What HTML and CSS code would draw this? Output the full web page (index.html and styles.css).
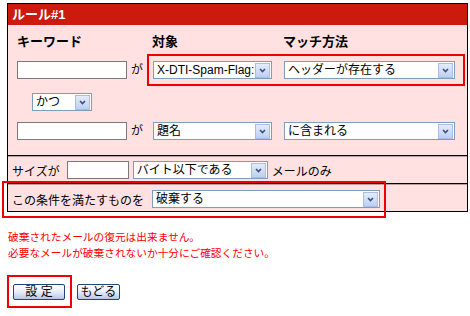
FILE: index.html
```html
<!DOCTYPE html>
<html lang="ja">
<head>
    <meta charset="UTF-8">
    <link rel="stylesheet" href="styles.css">
    <title>ルール設定</title>
</head>
<body>
<div class="page">

    <div class="rule">
        <div class="rule-title">ルール#1</div>

        <div class="cond">
            <div class="cond-head">
                <span class="col-key">キーワード</span>
                <span class="col-target">対象</span>
                <span>マッチ方法</span>
            </div>

            <div class="cond-row">
                <div class="input"></div>
                <span class="ga">が</span>
                <div class="pair mark mark-pair">
                    <div class="select sel-target"><span class="sel-text">X-DTI-Spam-Flag:</span><span class="arrow"><svg width="7" height="5" viewBox="0 0 7 5"><path d="M1 1 L3.5 3.5 L6 1" fill="none" stroke="#3b4f78" stroke-width="1.6"/></svg></span></div>
                    <div class="select sel-match"><span class="sel-text">ヘッダーが存在する</span><span class="arrow"><svg width="7" height="5" viewBox="0 0 7 5"><path d="M1 1 L3.5 3.5 L6 1" fill="none" stroke="#3b4f78" stroke-width="1.6"/></svg></span></div>
                </div>
            </div>

            <div class="and-row">
                <div class="select sel-and"><span class="sel-text">かつ</span><span class="arrow"><svg width="7" height="5" viewBox="0 0 7 5"><path d="M1 1 L3.5 3.5 L6 1" fill="none" stroke="#3b4f78" stroke-width="1.6"/></svg></span></div>
            </div>

            <div class="cond-row cond-row-2">
                <div class="input"></div>
                <span class="ga">が</span>
                <div class="pair">
                    <div class="select sel-target"><span class="sel-text">題名</span><span class="arrow"><svg width="7" height="5" viewBox="0 0 7 5"><path d="M1 1 L3.5 3.5 L6 1" fill="none" stroke="#3b4f78" stroke-width="1.6"/></svg></span></div>
                    <div class="select sel-match"><span class="sel-text">に含まれる</span><span class="arrow"><svg width="7" height="5" viewBox="0 0 7 5"><path d="M1 1 L3.5 3.5 L6 1" fill="none" stroke="#3b4f78" stroke-width="1.6"/></svg></span></div>
                </div>
            </div>
        </div>

        <div class="size-row">
            <span>サイズが</span>
            <div class="input input-size"></div>
            <div class="select sel-size"><span class="sel-text">バイト以下である</span><span class="arrow"><svg width="7" height="5" viewBox="0 0 7 5"><path d="M1 1 L3.5 3.5 L6 1" fill="none" stroke="#3b4f78" stroke-width="1.6"/></svg></span></div>
            <span class="size-tail">メールのみ</span>
        </div>

        <div class="action-row">
            <div class="action mark mark-action">
                <span>この条件を満たすものを</span>
                <div class="select sel-action"><span class="sel-text">破棄する</span><span class="arrow"><svg width="7" height="5" viewBox="0 0 7 5"><path d="M1 1 L3.5 3.5 L6 1" fill="none" stroke="#3b4f78" stroke-width="1.6"/></svg></span></div>
            </div>
        </div>
    </div>

    <p class="warn">破棄されたメールの復元は出来ません。<br>必要なメールが破棄されないか十分にご確認ください。</p>

    <div class="buttons">
        <div class="save-frame"><button type="button" class="btn btn-save">設 定</button></div>
        <button type="button" class="btn btn-back">もどる</button>
    </div>

</div>
</body>
</html>
```

FILE: styles.css
```css
body {
    margin: 0;
    font-family: "Liberation Sans", "Noto Sans CJK JP", sans-serif;
    font-size: 12px;
    color: #000;
    background-color: #ffffff;
}

.page {
    padding: 3px 0 0 7px;
}

.rule {
    width: 461px;
    box-sizing: border-box;
    border: 1px solid #000;
    background-color: #ffe1e1;
}

.rule-title {
    height: 21px;
    line-height: 21px;
    padding-left: 4px;
    background-color: #cc1a0e;
    color: #fff;
    font-weight: bold;
    font-size: 13px;
}

.cond {
    padding: 8px 0 15px 9px;
}

.cond-head {
    display: flex;
    height: 18px;
    line-height: 18px;
    font-size: 13px;
    font-weight: bold;
}

.col-key {
    width: 135px;
}

.col-target {
    width: 131px;
}

.cond-row {
    display: flex;
    align-items: center;
    margin-top: 10px;
}

.cond-row-2 {
    margin-top: 11px;
}

.and-row {
    display: flex;
    margin: 14px 0 0 15px;
}

.input {
    width: 110px;
    height: 18px;
    box-sizing: border-box;
    border: 1px solid #7a7a7a;
    background-color: #fff;
}

.ga {
    width: 22px;
    padding-left: 4px;
    line-height: 18px;
}

.pair {
    display: flex;
    gap: 12px;
}

.select {
    display: flex;
    align-items: center;
    height: 18px;
    box-sizing: border-box;
    border: 1px solid #7f9db9;
    background-color: #fff;
}

.sel-text {
    flex: 1;
    overflow: hidden;
    white-space: nowrap;
    padding-left: 3px;
    line-height: 16px;
}

.arrow {
    display: flex;
    align-items: center;
    justify-content: center;
    width: 13px;
    height: 13px;
    margin: 0 1px;
    border: 1px solid #a9bde6;
    background: linear-gradient(#e4ecfc, #bccff3);
}

.sel-target {
    width: 119px;
}

.sel-match {
    width: 171px;
}

.sel-and {
    width: 60px;
}

.size-row {
    display: flex;
    align-items: center;
    border-top: 1px solid #000;
    box-shadow: inset 0 1px 0 #b9a0a0;
    padding: 5px 0 4px 4px;
}

.input-size {
    width: 62px;
    margin-left: 7px;
}

.sel-size {
    width: 135px;
    margin-left: 4px;
}

.size-tail {
    margin-left: 4px;
}

.action-row {
    border-top: 1px solid #000;
    box-shadow: inset 0 1px 0 #b9a0a0;
    padding: 6px 0 3px 4px;
}

.action {
    display: inline-flex;
    align-items: center;
}

.sel-action {
    width: 228px;
    margin-left: 8px;
}

/* red highlight frames */
.mark {
    position: relative;
}

.mark::after {
    content: "";
    position: absolute;
    border: 2px solid #ee0000;
    pointer-events: none;
}

.mark-pair::after {
    top: -7px;
    bottom: -7px;
    left: -6px;
    right: -10px;
}

.mark-action::after {
    top: -9px;
    bottom: -10px;
    left: -10px;
    right: -6px;
}

.warn {
    margin: 17px 0 0 1px;
    font-size: 10.7px;
    line-height: 16px;
    color: #ff0000;
}

.buttons {
    display: flex;
    align-items: center;
    gap: 5px;
    margin-top: 14px;
}

.save-frame {
    border: 2px solid #ee0000;
    padding: 7px 5px 6px 4px;
}

.btn {
    display: block;
    height: 16px;
    margin: 0;
    padding: 0;
    box-sizing: border-box;
    border: 1px solid #23437a;
    border-radius: 2px;
    background: linear-gradient(#ffffff, #e6ecf7 50%, #b7c6e4);
    font-family: "Liberation Sans", "Noto Sans CJK JP", sans-serif;
    font-size: 12px;
    line-height: 14px;
    color: #000;
}

.btn-save {
    width: 52px;
}

.btn-back {
    width: 43px;
}
```
